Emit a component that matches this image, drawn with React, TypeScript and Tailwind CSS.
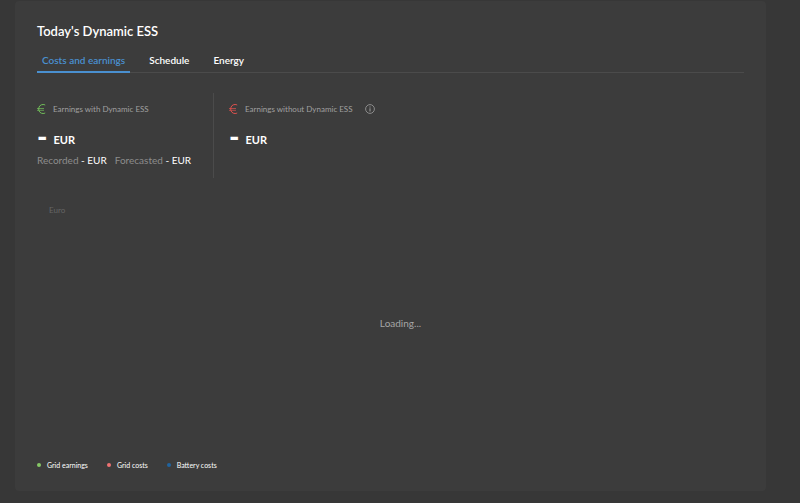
import React, { useState } from 'react';

const tabs = ['Costs and earnings', 'Schedule', 'Energy'];

const legend = [
  { label: 'Grid earnings', dot: 'bg-[#86c866]' },
  { label: 'Grid costs', dot: 'bg-[#ee7272]' },
  { label: 'Battery costs', dot: 'bg-[#20649f]' },
];

function EuroIcon({ className }: { className: string }) {
  return (
    <svg viewBox="0 0 10 10" className={`h-[10px] w-[10px] shrink-0 ${className}`} fill="none" stroke="currentColor" strokeWidth="1" aria-hidden="true">
      <path d="M8.2 1C7.5.7 6.8.5 6.1.5 3.4.5 1.7 2.4 1.7 5s1.7 4.5 4.4 4.5c.7 0 1.4-.2 2.1-.5" />
      <path d="M0 4.5h7M0 6.3h7" strokeWidth="0.7" />
    </svg>
  );
}

function InfoIcon() {
  return (
    <svg viewBox="0 0 10 10" className="h-[10px] w-[10px]" fill="none" stroke="currentColor" aria-hidden="true">
      <circle cx="5" cy="5" r="4.4" strokeWidth="0.8" />
      <path d="M5 4.3v3.2M5 2.5v1" strokeWidth="1" />
    </svg>
  );
}

function Amount() {
  return (
    <div className="mt-[13px] flex h-5 items-center gap-[6px] text-white">
      <span className="pb-2 text-[28px] leading-5 font-black">-</span>
      <span className="text-[11px] leading-4 font-bold">EUR</span>
    </div>
  );
}

export default function App() {
  const [active, setActive] = useState(tabs[0]);

  return (
    <div className="min-h-screen bg-[#373737] pt-px pr-[34px] pb-3 pl-[15px] font-['Lato',sans-serif]">
      <main className="flex min-h-[calc(100vh-13px)] flex-col rounded bg-[#3c3c3c] px-[22px] pt-5 pb-[18px]">
        <h1 className="text-[13px] leading-5 font-semibold text-white">Today's Dynamic ESS</h1>

        {/* Tabs */}
        <div role="tablist" className="mt-2 flex gap-[14px] border-b border-[#4b4b4b]">
          {tabs.map((tab) => (
            <button
              key={tab}
              role="tab"
              aria-selected={active === tab}
              onClick={() => setActive(tab)}
              className={`-mb-px h-6 border-b-2 px-[5px] text-[10px] leading-4 font-semibold ${
                active === tab ? 'border-[#4a90d0] text-[#4a90d0]' : 'border-transparent text-white'
              }`}
            >
              {tab}
            </button>
          ))}
        </div>

        {/* Totals */}
        <div className="mt-5 flex h-[85px]">
          <section className="w-[177px] shrink-0 border-r border-[#4b4b4b] pt-2">
            <div className="flex h-4 items-center gap-[6px] text-[8px] text-[#a0a0a0]">
              <EuroIcon className="text-[#72bf5a]" />
              <span>Earnings with Dynamic ESS</span>
            </div>
            <Amount />
            <div className="mt-[2px] flex gap-2 text-[10px] leading-4 whitespace-nowrap text-[#8c8c8c]">
              <span>Recorded <span className="text-white">- EUR</span></span>
              <span>Forecasted <span className="text-white">- EUR</span></span>
            </div>
          </section>
          <section className="pt-2 pl-[15px]">
            <div className="flex h-4 items-center gap-[6px] text-[8px] text-[#a0a0a0]">
              <EuroIcon className="text-[#e0524f]" />
              <span>Earnings without Dynamic ESS</span>
              <button aria-label="More information" className="ml-[6px]">
                <InfoIcon />
              </button>
            </div>
            <Amount />
          </section>
        </div>

        {/* Chart */}
        <div className="mt-6 flex flex-1 flex-col">
          <div className="pl-3 text-[8px] leading-4 text-[#666666]">Euro</div>
          <div className="flex flex-1 items-center justify-center pb-7 pl-5 text-[10px] text-[#a6a6a6]">Loading...</div>
        </div>

        <ul className="flex gap-[19px] text-[7px] leading-4 text-white">
          {legend.map((item) => (
            <li key={item.label} className="flex items-center gap-[6px]">
              <span className={`h-1 w-1 rounded-full ${item.dot}`} />
              {item.label}
            </li>
          ))}
        </ul>
      </main>
    </div>
  );
}
